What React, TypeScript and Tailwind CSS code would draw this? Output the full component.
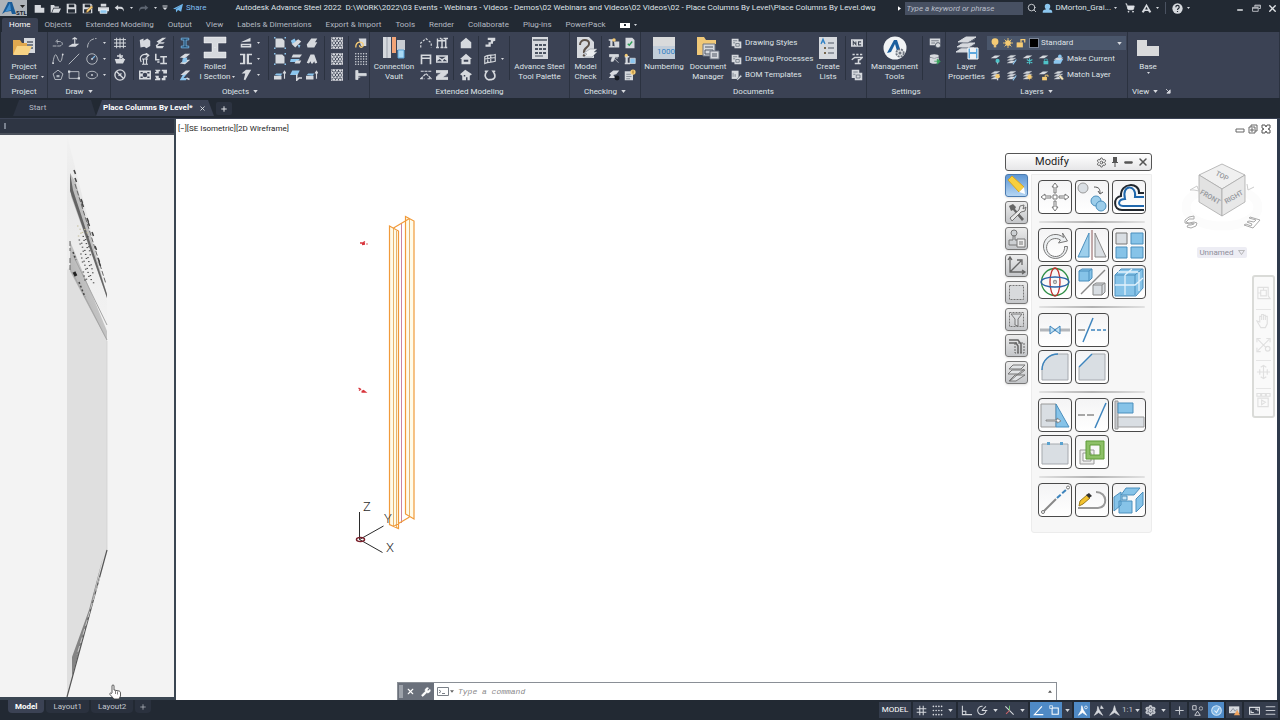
import type { ReactNode } from 'react';
import clsx from 'clsx';
import { Search, ShoppingCart, Settings, Menu, Plus, X, Minus, Wrench } from 'lucide-react';

// Ribbon + status bar glyphs, all on a 16x16 grid
const L = '#d6d9de';
const B = '#8cc6ee';
const Y = '#f5cb74';
const G = '#4fc3c9';

const sheet = <path d="M2 5l5-3h7l-5 3zM2 9l5-3h7l-5 3zM2 13l5-3h7l-5 3z" fill={L} stroke={L} strokeWidth=".6" />;
const checker = (
  <g fill={L}>
    {[0, 1, 2, 3, 4].map((r) =>
      [0, 1, 2, 3].map((c) => <circle key={`${r}-${c}`} cx={2 + c * 4 - (r % 2 ? 0 : -2)} cy={2 + r * 3} r="1.500" />),
    )}
    <path d="M.5.5h15v15H.5zM0 4l4-4M0 10L10 0M0 16L16 0M6 16L16 6M12 16l4-4" fill="none" stroke={L} strokeWidth=".8" />
  </g>
);

const ICONS: Record<string, ReactNode> = {
  newFile: <path d="M1 3h9l5 4v7H1zM10 3v4h5" fill={L} />,
  open: <path d="M1 3h5l1 2h6v2H5l-3 7H1zM5.500 8H16l-3 6H3z" fill={L} />,
  save: <path d="M1 1h12l2 2v12H1zM4 2v4h8V2zM3 9v5h10V9z" fill={L} fillRule="evenodd" />,
  saveAs: <><path d="M1 1h12l2 2v12H1zM4 2v4h8V2zM3 9v5h10V9z" fill={L} fillRule="evenodd" /><path d="M6 14l1-4 7-6 2 2-7 7z" fill={Y} stroke="#6b4a26" strokeWidth=".7" /></>,
  print: <><path d="M4 1h8v4H4zM0 6h16v6H0z" fill={L} /><path d="M3 10h10v5H3z" fill={B} stroke="#fff" /></>,
  undo: <path d="M6 3L1 7l5 4V8.500h3c3 0 4 1 5 4 1-4-1-7-5-7H6z" fill={L} />,
  redo: <path d="M10 3l5 4-5 4V8.500H7c-3 0-4 1-5 4C1 8.500 3 5.500 7 5.500h3z" fill="#5d6571" />,
  down: <path d="M3 3h10v2H3zM3 7h10l-5 5z" fill={L} />,
  plane: <path d="M0 9L16 1l-3 13-5-3-3 4-.5-5L13 4 3.500 10z" fill="#6fb6ec" />,
  user: <path d="M8 1a4 4 0 014 4c0 2-1 3.500-2 4 4 .5 5 2 5 5H1c0-3 1-4.500 5-5C5 8.500 4 7 4 5a4 4 0 014-4z" fill={B} />,
  adsk: <path d="M8 1l7 12-3 1-1.500-2.500h-5L4 14l-3-1zM8 5.500l-2 4h4z" fill={L} fillRule="evenodd" />,
  help: <><circle cx="8" cy="8" r="7.500" fill={L} /><path d="M5.500 6c0-3.500 5-3.500 5 0 0 2-2.500 2-2.500 4M8 11.500v1.500" stroke="#222933" strokeWidth="1.700" fill="none" /></>,
  restore: <path d="M5 5V2h10v6h-3M1 6h10v7H1zM1 7.500h10M5 3.500h10" stroke={L} strokeWidth="1.400" fill="none" />,
  pline: <path d="M1 12h9c5 0 5-6 0-6H6M8 3.500L5 6l3 2.500" stroke={L} fill="none" strokeDasharray="5 1" />,
  colTool: <><path d="M9 1v10M6 3l3-2 3 2" stroke={L} strokeWidth="1.500" fill="none" /><path d="M1 12l5-3h9l-5 4H1z" fill={L} /></>,
  arc: <path d="M2 14C2 7 7 2 14 2" stroke={L} fill="none" strokeDasharray="7 1.500" />,
  spline: <><path d="M1 14C4-4 6 3 8 8s5 6 6-6" stroke={L} fill="none" /><circle cx="1.500" cy="13.500" r="1.200" fill={L} /><circle cx="14.300" cy="2" r="1.200" fill={L} /></>,
  line: <path d="M1 15L15 1" stroke={L} fill="none" />,
  circle: <><circle cx="8" cy="8" r="7" stroke={L} fill="none" /><path d="M8 8l4-4" stroke="#7bb8e6" strokeWidth="1.500" /><circle cx="8" cy="8" r="1.200" fill={L} /></>,
  polygon: <><path d="M8 1.500l6.500 5L12 14H4L1.500 6.500z" stroke={L} fill="none" /><path d="M6 8h4v3H6z" fill="#a9b0ba" /></>,
  rect: <><path d="M1.500 3.500h13v9h-13z" stroke={L} fill="none" /><path d="M0 2h3v3H0zM13 11h3v3h-3z" fill={L} /></>,
  ellipse: <><ellipse cx="8" cy="8" rx="7.300" ry="5" stroke={L} fill="none" /><circle cx="8" cy="8" r="1.200" fill={L} /></>,
  gridLines: <path d="M3.500 1v14M8 1v14M12.500 1v14M0 3.500h16M0 8h16M0 12.500h16" stroke={L} strokeWidth="1.300" />,
  levelTool: <><path d="M8 1v12M4 4h8M8 5l5 3" stroke={L} strokeWidth="1.700" fill="none" /><path d="M1 8h14l-3 6H3z" fill={L} /></>,
  noSign: <><circle cx="8" cy="8" r="6.800" stroke={L} strokeWidth="1.800" fill="none" /><path d="M3 3l10 10M6 9l4-3" stroke={L} strokeWidth="1.800" /></>,
  block3d: <path d="M1 4l5-2v3l5-3 4 3v7l-5 3-3-2-5 1z" fill={L} />,
  plates: <path d="M2 6l8-5h5L7 7h6l-2 2H6l-3 3h9l-2 3H2l-1-4 4-3z" fill={L} />,
  hook: <path d="M3 12C-1 4 6 0 12 3M9 0l4 3-4 4M6 8v7M10 8v7M4 8h8M4 15h8" stroke={L} strokeWidth="1.600" fill="none" />,
  lBeam: <path d="M1 1v8h5M7 5h9M7 14h9M11.500 5v9M3 12h3" stroke={L} strokeWidth="2.200" fill="none" />,
  box4: <path d="M0 2h16v12H0zM2 4v2h3V4zM11 4v2h3V4zM5 8a3 3 0 006 0 3 3 0 00-6 0zM2 10v2h3v-2zM11 10v2h3v-2z" fill={L} fillRule="evenodd" />,
  box4b: <path d="M0 1h7v2H5v3H0V4h2zM9 1h7v5h-5V3H9zM0 9h5v3h2v3H0v-2h2zM11 9h5v2h-2v4H9v-3h2z" fill={L} />,
  iBlue: <path d="M3 1.500h10v2.500H9.500v8H13v2.500H3V12h3.500V4H3z" fill="#264e6f" stroke="#79bdf0" />,
  beam: <><path d="M1 6l7-5h7L8 7zM1 14l7-5h7l-7 6z" fill={L} /><path d="M5 7l6-1-1 6-6 1z" fill={B} /></>,
  beamB: <><path d="M2 8l7-6h6L9 8z" fill={L} /><path d="M5 8l5-1-4 5h5l-2 3H1z" fill={B} /><path d="M10 12l4 2" stroke={L} strokeWidth="2" /></>,
  taper: <path d="M1 7L14 1v5zM1 9h14v5H1zM3 11v1h10v-1z" fill={L} fillRule="evenodd" />,
  channels: <path d="M0 1h7v14H0v-2h4V3H0zM16 1H9v14h7v-2h-4V3h4z" fill={L} />,
  bent: <path d="M2 6l6-5h7l-3 5-5 9-2-1 2-8z" fill={L} />,
  plate: <><path d="M2 2h9l3 3v9H2z" fill={L} /><path d="M0 0h2v2H0zM14 0h2v2h-2zM0 14h2v2H0zM14 14h2v2h-2z" fill={B} /></>,
  boltUp: <><path d="M2 9l9-6 4 3-8 8z" fill={L} /><path d="M1 5l5-3 2 4-5 3z" fill={B} /><path d="M10 10l4 1-2 4z" fill={B} /></>,
  folded: <path d="M1 10l6-8h8l-3 5h3l-4 7H2z" fill={L} />,
  splitPl: <><path d="M4 2h12l-3 4H2z" fill={L} /><path d="M1 8h12l-3 4H0z" fill={B} /><path d="M8 10h7l-2 4H6z" fill={L} /></>,
  cone: <path d="M1 13L6 2h5l4 11-3 1-1-3-2 3H7l-1-3-2 3z" fill={L} />,
  slabUp: <><path d="M0 9h10v5H0z" fill={L} /><path d="M1 8l2-2h8L9 9z" fill={B} /><path d="M14 13V4M12 6l2-3 2 3" stroke={L} strokeWidth="1.500" fill="none" /></>,
  slabDn: <><path d="M3 2h10l-3 6H0z" fill={B} /><path d="M9 7v8l3-3h4" stroke={L} strokeWidth="2" fill="none" /></>,
  checker,
  dots: <g fill={L}>{[1, 4.5, 8, 11.5, 15].map((y) => [1, 4.5, 8, 11.5, 15].map((x) => <circle key={`${x}-${y}`} cx={x} cy={y} r="1" />))}</g>,
  shearStud: <path d="M1 2h3v12H1zM4 6h11v3H4zM4 11h3" stroke={L} fill={L} />,
  cloud: <><path d="M5 2h10v10H8z" fill={L} /><path d="M1 14c0-9 10-9 10-3 0 3-5 4-5 0" stroke={Y} strokeWidth="1.800" fill="none" /></>,
  roofDash: <path d="M1 14V8l7-6 7 6v6" stroke={L} strokeWidth="1.600" fill="none" strokeDasharray="3 2" />,
  frames: <path d="M2 2v12M8 2v12M13 2v12M0 14h4M6 14h4M11 14h4M2 5h11M5 2h2M10 2h6" stroke={L} strokeWidth="1.900" fill="none" />,
  portal: <path d="M2 15V3h12v12M2 7h12" stroke={L} strokeWidth="2.200" fill="none" />,
  truss: <path d="M0 3h16v10H0zM3 5h10l-5 3zM1 11l4-3 3 3zM15 11l-4-3-2 3z" fill={L} fillRule="evenodd" />,
  trussD: <path d="M1 3h14M1 13l7-7 7 7M0 13h6M10 13h6" stroke={L} strokeWidth="1.600" fill="none" strokeDasharray="4 1" />,
  trussZ: <path d="M0 2h16v3l-7 6h7v3H0v-3l7-6H0zM2 8h3M11 8h3" fill={L} stroke={L} />,
  house: <path d="M1 7l7-6 7 6v8H1z" fill={L} />,
  houseM: <path d="M0 8l8-7 8 7h-2v7H2V8zM5 9v2.500h6V9z" fill={L} fillRule="evenodd" />,
  houseS: <path d="M0 7l7-6 9 6-3 2v6H3V9zM5 8v2h2V8zM8 11v4h2v-4z" fill={L} fillRule="evenodd" />,
  stair: <path d="M5 1h10v4l-3 1v3H9v4H2v-3h4V7h3V4H5z" fill={L} />,
  railing: <path d="M1 5c5-4 9-1 14-3v9c-5 2-9 0-14 3zM5 3v10M9 3v9M1 8l14-2" stroke={L} strokeWidth="1.500" fill="none" />,
  cage: <path d="M1 3h3c-6 7 1 13 4 11 6 1 9-4 4-11h3" stroke={L} strokeWidth="2.200" fill="none" />,
  chk1: <><path d="M1 3h7v2H6v7h3v2H1v-2h2V5H1z" fill={L} /><path d="M8 6h7v8H9z" fill={L} /><circle cx="8" cy="4" r="2.300" fill={Y} /></>,
  chk2: <><path d="M2 1h9l3 3v11H2z" fill={L} /><path d="M5 9l2 2 4-5" stroke="#2f9e58" strokeWidth="1.800" fill="none" /></>,
  chk3: <path d="M2 2h12v3h-4l-3 6H4l2-6H2zM9 8l5 5M12 2v6" fill={L} stroke={L} />,
  chk4: <><path d="M1 4h6v2H5v7h3v2H1v-2h1V6H1z" fill={L} /><path d="M8 7h7v7H8z" fill={B} stroke={L} /><circle cx="3" cy="3" r="2" fill={Y} /></>,
  chk5: <><path d="M2 6l5-4h8l-4 5-4 1 3 4H1l3-4z" fill={L} /><circle cx="12" cy="12" r="3.300" fill="#15191f" /></>,
  chk6: <><path d="M1 3h11v12H1z" fill={L} /><path d="M3 7h6M3 10h7M3 13h5" stroke="#6d7581" /><circle cx="12" cy="4" r="3.500" fill={Y} /><path d="M12 2v4" stroke="#7d5a18" /></>,
  doc: <><path d="M1 1h10v4h4v10H5v-3H1z" fill={L} /><path d="M3 4h6M3 7h3M7 8h5v4H7z" stroke="#5b6472" fill="none" /></>,
  docPen: <><path d="M1 1h10v12H1z" fill={L} /><path d="M3 4v6M6 6v4" stroke="#5b6472" /><path d="M8 14l6-7 2 2-6 6z" fill={L} stroke="#3b4453" strokeWidth=".7" /></>,
  nc: <><path d="M0 3h16v10H0z" fill={L} /><path d="M3 11V6l3.500 4V6M13.500 6.500H10v4h3.500" stroke="#3f4756" strokeWidth="1.400" fill="none" /></>,
  dxf: <path d="M2 2h3M7 2h3M12 2h3M1 9l4-3h10l-3 3h-2v5h3M9 14H5" stroke={L} strokeWidth="2" fill="none" />,
  mgmtA: <><path d="M1 2h14v9H1z" fill={L} /><path d="M3 5h10M3 8h5" stroke="#59616f" /><circle cx="12" cy="11" r="3.500" fill={L} stroke="#3b4453" /></>,
  mgmtB: <><ellipse cx="7" cy="4" rx="6" ry="2.500" fill={L} /><path d="M1 5.500c3 2 9 2 12 0v7c-3 2.500-9 2.500-12 0z" fill={L} /><path d="M7 11h6M11 8l4 3-4 4z" stroke="#39a35c" fill="#39a35c" /></>,
  layOff: <><path d="M1 6l6-4h8l-6 4z" fill={L} /><circle cx="11" cy="10" r="3" fill={G} /><path d="M11 12v3" stroke={L} /></>,
  layIso: <>{sheet}<path d="M10 15l5-7" stroke={B} strokeWidth="1.600" /></>,
  layFrz: <><path d="M1 6l6-4h8l-6 4z" fill={L} /><path d="M11 6v9M7 8l8 5M15 8l-8 5" stroke={G} strokeWidth="1.600" /></>,
  layLock: <><path d="M1 6l6-4h8l-6 4z" fill={L} /><path d="M8 10h7v5H8z" fill={G} /><path d="M9.500 10V7.500h4V10" stroke={G} fill="none" /></>,
  layCur: <><path d="M1 10l5-3h9l-4 7H1z" fill={B} /><path d="M1 8l5-3h9l-5 4z" fill={L} /><circle cx="10" cy="3.500" r="2.700" fill={B} /></>,
  layOn: <>{sheet}<circle cx="11" cy="9" r="3.300" fill={Y} /><path d="M11 12v3" stroke={L} strokeWidth="2" /></>,
  layThaw: <>{sheet}<circle cx="11" cy="10" r="3" fill={Y} /><path d="M11 5v10M6 10h10M7.500 6.500l7 7M14.500 6.500l-7 7" stroke={Y} strokeWidth=".8" /></>,
  layUnlk: <><path d="M1 6l6-4h8l-6 4z" fill={L} /><path d="M6 10h7v5H6z" fill={Y} /><path d="M10.500 10V7.500h4V10" stroke={Y} strokeWidth="1.400" fill="none" /></>,
  layMatch: <>{sheet}<path d="M8 9l3-2 5 6-3 2z" fill="#f4e3b4" stroke="#3b4453" strokeWidth=".6" /></>,
  bulb: <><circle cx="8" cy="6" r="5.500" fill={Y} /><path d="M6 10h4v5H6z" fill="#e7c27a" /></>,
  sun: <><circle cx="8" cy="8" r="4.500" fill={Y} /><path d="M8 0v16M0 8h16M2.500 2.500l11 11M13.500 2.500l-11 11" stroke={Y} strokeWidth="1.400" /></>,
  lock: <><path d="M1 7h10v8H1z" fill={Y} /><path d="M8 7V2.500h6V7" stroke={Y} strokeWidth="2" fill="none" /></>,
  hash: <path d="M5.500 1v14M10.500 1v14M1 5.500h14M1 10.500h14" stroke={L} strokeWidth="1.500" />,
  dotGrid: <g fill={L}>{[2, 6, 10, 14].map((x) => [2, 8, 14].map((y) => <circle key={`${x}-${y}`} cx={x} cy={y} r="1.200" />))}</g>,
  ortho: <path d="M2 1v13h14M2 9h5v5" stroke={L} strokeWidth="1.500" fill="none" />,
  polar: <path d="M13 8a6 6 0 11-5-6M7 8h8M7 8l6-6" stroke={L} strokeWidth="1.500" fill="none" />,
  isoDraft: <><path d="M2 2l12 12" stroke={L} strokeWidth="1.500" /><path d="M8 1v7" stroke="#63b96b" strokeWidth="1.500" /><path d="M8 8l-5 5" stroke="#d3646a" strokeWidth="1.500" /></>,
  angle: <path d="M13 2L2 14h13" stroke="#fff" strokeWidth="1.600" fill="none" />,
  osnap: <><path d="M4.500 4.500h9v9h-9z" stroke="#fff" strokeWidth="1.500" fill="none" /><path d="M1 1h4v4H1z" stroke="#fff" fill="#5a93cc" /></>,
  scaleA: <><path d="M7 1l2 6 5 8-6-4-6 4 4-7z" fill="#fff" stroke="#fff" /><circle cx="13" cy="3.500" r="2" stroke="#fff" fill="none" /></>,
  scaleB: <path d="M7 2l2 5 5 8-6-4-6 4 4-7zM12 1l-1 4h4z" fill={L} stroke={L} />,
  scaleC: <path d="M8 1l2 7 5 7-7-4-7 4 5-7z" fill={L} stroke={L} />,
  shapes: <><path d="M1 1h5v6H1zM8 9l4 6H4z" stroke={L} strokeWidth="1.300" fill="none" /><circle cx="13" cy="5" r="2.500" stroke={L} fill="none" /></>,
  hwAccel: <><circle cx="8" cy="8" r="7" fill="#7fb6e6" stroke="#cfe4f6" strokeWidth="1.500" /><path d="M5 8l3 3 4-7" stroke="#e9f3fc" strokeWidth="1.500" fill="none" /></>,
  warn: <><path d="M0 2h15v10H0z" fill={L} /><path d="M2 10l4-5 3 4 3-3" stroke="#667080" fill="none" /><path d="M7 15l5-8 4 8z" fill="#f0a35e" /></>,
  clean: <path d="M.8 3.500h14.500v10H.8zM9 6h4v3M7 11H3V8" stroke={L} strokeWidth="1.600" fill="none" />,
};

function Icon({ name, className = 'size-3' }: { name: string; className?: string }) {
  return (
    <svg viewBox="0 0 16 16" className={clsx('shrink-0', className)} aria-hidden="true">
      {ICONS[name]}
    </svg>
  );
}

const Caret = ({ small }: { small?: boolean }) => (
  <svg viewBox="0 0 6 4" className={small ? 'w-[3px] h-[2px] shrink-0' : 'w-[5px] h-[3px] shrink-0'} aria-hidden="true">
    <path d="M0 0h6L3 4z" fill={L} />
  </svg>
);

const Divider = () => <div className="w-px shrink-0 my-1 bg-[#2b3240]" />;

// Small tool buttons, filled column by column, three rows each
function Tools({ cols, className }: { cols: string[][]; className: string }) {
  return (
    <div className={clsx('flex shrink-0 pt-[3px]', className)}>
      {cols.map((col, i) => (
        <div key={i} className={col.includes('caret') ? 'w-2' : 'w-4'}>
          {col.map((name, j) => name ? (
            <button key={j} type="button" aria-label={name} className="flex w-full h-4 items-center justify-center">
              {name === 'caret' ? <Caret small /> : <Icon name={name} />}
            </button>
          ) : <div key={j} className="h-4" />)}
        </div>
      ))}
    </div>
  );
}

function BigTool({ icon, lines, caret, className }: { icon: ReactNode; lines: string[]; caret?: boolean; className: string }) {
  return (
    <button type="button" className={clsx('flex flex-col items-center shrink-0 pt-1 leading-[10px]', className)}>
      <svg viewBox="0 0 24 24" className="size-6 mb-[2px]" aria-hidden="true">{icon}</svg>
      {lines.map((l, i) => (
        <span key={l} className="relative whitespace-nowrap">
          {l}
          {caret && i === lines.length - 1 && lines.length > 1 && (
            <span className="absolute left-full bottom-1 ml-[2px]"><Caret small /></span>
          )}
        </span>
      ))}
      {caret && lines.length === 1 && <span><Caret small /></span>}
    </button>
  );
}

function Group({ title, arrow, left, className, children }: { title: string; arrow?: boolean; left?: boolean; className: string; children: ReactNode }) {
  return (
    <section className={clsx('flex flex-col bg-[#3b4254] border-r border-[#2b3240]', className)}>
      <div className="flex h-[52px]">{children}</div>
      <div className={clsx('flex h-[14px] items-center gap-1 pt-px', left ? 'pl-1' : 'justify-center')}>
        {title}
        {arrow && <Caret />}
        {left && <svg viewBox="0 0 6 6" className="ml-1 size-[5px]" aria-hidden="true"><path d="M0 0l4 4M5 1v4H1z" stroke={L} fill={L} /></svg>}
      </div>
    </section>
  );
}

const BIG: Record<string, ReactNode> = {
  project: <><path d="M12 2h11v15H12z" fill="#d6d9de" /><path d="M15 6h6M15 9h6M15 12h6" stroke="#555d6b" strokeWidth="1.300" /><path d="M1 4h7l2 3h5v11H1z" fill="#e0a84f" /><path d="M5 10h15l-4 9H1z" fill="#f8d384" /></>,
  rolled: <path d="M1 1h22v6h-8v9h8v6H1v-6h8V7H1zM12 11v1" fill={L} stroke="#fff" strokeWidth=".5" />,
  vault: <><path d="M1 1h8v21H1z" fill={L} /><path d="M5 1v21" stroke="#9ba1ab" /><path d="M10 1h4v16h-4z" fill="#f2a477" /><path d="M15 4h8v10h-8z" fill="#c9cdd3" /><path d="M16 14h6v8h-6z" fill="#a9d9f4" stroke="#5aa3d8" /></>,
  palette: <><path d="M4 1h16v22H4z" fill={L} /><path d="M5 4h14" stroke="#4b5361" strokeWidth="1.500" />{[8, 12, 16].map((y) => <path key={y} d={`M7 ${y}h3v2H7zM11 ${y}h3v2h-3zM15 ${y}h3v2h-3z`} fill="#4b5361" />)}<path d="M7 20h8" stroke="#4b5361" /></>,
  check: <><path d="M3 1h12l5 5v16H3z" fill={L} /><path d="M6 9c0-7 10-6 9-1 0 4-6 3-5 9M9 19l2 1" stroke="#5c5149" strokeWidth="2" fill="none" /><path d="M10 17l6-4h7l-3 3h3l-5 5h-8l3-3z" fill="#eceef0" stroke="#8b919b" strokeWidth=".6" /></>,
  numbering: <><path d="M1 1h22v22H1z" fill="#d9dadb" /><path d="M1 10h22v13H1z" fill="#c2cdd9" /><text x="14" y="18" textAnchor="middle" fontSize="8" fill="#2e7fc4">1000</text></>,
  docman: <><path d="M1 1h7l2 3h10v4h-8v11H1z" fill="#f0c878" /><path d="M7 8h12v12H7z" fill={L} stroke="#6c7482" /><path d="M9 11h8M9 14h8v4H9z" stroke="#4f5765" fill="none" /><path d="M14 15h9v8h-9z" fill={L} stroke="#6c7482" /><path d="M16 18h5M16 20h5" stroke="#4f5765" /></>,
  lists: <><path d="M3 1h18v22H3z" fill={L} /><path d="M5 8l2-5 2 5M6 6h2" stroke="#2e7fc4" strokeWidth="1.200" fill="none" /><path d="M12 7h6M12 12h6M12 17h6" stroke="#4f5765" /><path d="M8 11h2v2H8zM8 16h2v2H8z" fill="#77674e" /></>,
  mgmt: <><circle cx="12" cy="12" r="11.500" fill="#f1f3f5" /><path d="M4 17l7-13h3l4 12-4-1-2-7-4 8z" fill="#1b5f9e" /><circle cx="17" cy="17" r="3.700" fill="#e2e4e7" stroke="#6f7681" strokeWidth="1.800" strokeDasharray="2 1" /><circle cx="17" cy="17" r="1.500" fill="#6f7681" /></>,
  layers: <><path d="M3 6l8-5h10l-8 5zM2 11l6-4h12l-6 4zM1 16l6-4h12l-6 4z" fill={L} stroke={L} /><path d="M3 7h10l7-4M2 12h12l6-4" stroke="#6c7482" strokeWidth=".7" fill="none" /><path d="M13 12h10v11H13z" fill="#5da8de" stroke="#fff" /><path d="M15 12h6v4h-6zM15 18h6v5h-6z" fill="#eef1f4" /></>,
  base: <path d="M1 4h10v6h12v10H1z" fill="#d9dadb" />,
};

const RIBBON_TABS = ['Home', 'Objects', 'Extended Modeling', 'Output', 'View', 'Labels & Dimensions', 'Export & Import', 'Tools', 'Render', 'Collaborate', 'Plug-ins', 'PowerPack'];

function TitleBar() {
  const btn = 'flex w-4 shrink-0 h-4 items-center justify-center';
  return (
    <header className="flex h-4 shrink-0 items-center">
      <button type="button" aria-label="Application menu" className="w-[27px] h-4 shrink-0">
        <svg viewBox="0 0 27 16" className="w-[27px] h-4">
          <path d="M0 0h27v16H0z" fill="#aeb3b9" />
          <path d="M2 14L8 2h4l4 12h-4l-1-3-6 1z" fill="#1a5b97" />
          <path d="M5 12l5-9 1 7z" fill="#3f8fd0" />
          <path d="M20 5h5l-2.500 3z" fill="#222" />
          <text x="16" y="14.500" fontSize="6" fontWeight="700" fill="#16202c">STL</text>
        </svg>
      </button>
      <nav aria-label="Quick access" className="flex items-center pl-1">
        {['newFile', 'open', 'save', 'saveAs', 'print', 'undo'].map((n) => (
          <button key={n} type="button" aria-label={n} className={btn}><Icon name={n} className="size-[11px]" /></button>
        ))}
        <span className="w-2 flex justify-center"><Caret small /></span>
        <button type="button" aria-label="redo" className={btn}><Icon name="redo" className="size-[11px]" /></button>
        <span className="w-2 flex justify-center"><Caret small /></span>
        <button type="button" aria-label="customize" className="w-3 flex justify-center"><Icon name="down" className="size-2" /></button>
        <button type="button" className="flex items-center gap-[3px] pl-[2px] text-[#7fbdf0]">
          <Icon name="plane" className="size-[10px]" />Share
        </button>
      </nav>
      <h1 className="flex gap-1 pl-[29px] whitespace-nowrap">
        <span>Autodesk Advance Steel 2022</span>
        <span>D:\WORK\2022\03 Events - Webinars - Videos - Demos\02 Webinars and Videos\02 Videos\02 - Place Columns By Level\Place Columns By Level.dwg</span>
      </h1>
      <div className="ml-auto flex items-center shrink-0">
        <svg viewBox="0 0 4 6" className="w-[3px] h-[5px] mr-1" aria-hidden="true"><path d="M0 0l4 3-4 3z" fill="#fff" /></svg>
        <input aria-label="Search" placeholder="Type a keyword or phrase" className="w-[118px] h-[13px] px-[2px] bg-[#475062] italic placeholder:text-[#b9bec8] outline-none" />
        <button type="button" aria-label="Find" className="flex w-[18px] justify-center"><Search size={10} /></button>
        <button type="button" className="flex items-center gap-[3px] pl-px"><Icon name="user" className="size-[11px]" />DMorton_Grai...<Caret small /></button>
        <button type="button" aria-label="Store" className="pl-2"><ShoppingCart size={10} fill="currentColor" /></button>
        <button type="button" aria-label="Autodesk App Store" className="flex items-center gap-1 pl-[6px]"><Icon name="adsk" className="size-[11px]" /><Caret small /></button>
        <span className="w-px h-3 mx-[6px] bg-[#4a5261]" />
        <button type="button" aria-label="Help" className="flex items-center gap-1"><Icon name="help" className="size-[11px]" /><Caret small /></button>
        <div className="flex pl-[42px]">
          <button type="button" aria-label="Minimize" className="flex w-4 h-4 items-center justify-center pt-1"><Minus size={8} strokeWidth={4} /></button>
          <button type="button" aria-label="Restore" className={btn}><Icon name="restore" className="size-[9px]" /></button>
          <button type="button" aria-label="Close" className={btn}><X size={11} strokeWidth={3} /></button>
        </div>
      </div>
    </header>
  );
}

function Ribbon() {
  return (
    <>
      <nav aria-label="Ribbon tabs" className="flex h-4 shrink-0 items-end pl-[2px] text-[#b4b9c2]">
        {RIBBON_TABS.map((t, i) => (
          <button key={t} type="button" className={clsx('h-[14px] px-[7px] leading-[14px] whitespace-nowrap', i === 0 && 'bg-[#3b4254] text-white rounded-t-[2px]')}>{t}</button>
        ))}
        <button type="button" aria-label="Ribbon display" className="flex h-[14px] items-center gap-1 pl-[7px]">
          <span className="flex w-[10px] h-[5px] bg-white items-center justify-center"><span className="size-[2px] bg-[#222933]" /></span>
          <Caret small />
        </button>
      </nav>
      <div className="flex h-[66px] shrink-0 pl-px whitespace-nowrap">
        <Group title="Project" className="w-[47px]">
          <BigTool icon={BIG.project} lines={['Project', 'Explorer']} caret className="w-[46px]" />
        </Group>
        <Group title="Draw" arrow className="w-[63px]">
          <Tools className="pl-[2px]" cols={[['pline', 'spline', 'polygon'], ['colTool', 'line', 'rect']]} />
          <Tools className="pl-[2px]" cols={[['arc', 'circle', 'ellipse'], ['caret', 'caret', 'caret']]} />
        </Group>
        <Group title="Objects" arrow className="w-[259px]">
          <Tools className="w-[22px] pl-px" cols={[['gridLines', 'levelTool', 'noSign']]} />
          <Divider />
          <Tools className="w-[39px] pl-[3px]" cols={[['block3d', 'hook', 'box4'], ['plates', 'lBeam', 'box4b']]} />
          <Divider />
          <Tools className="w-6 pl-[3px]" cols={[['iBlue', 'beam', 'beamB']]} />
          <BigTool icon={BIG.rolled} lines={['Rolled', 'I Section']} caret className="w-[34px]" />
          <Tools className="w-[36px] pl-[6px]" cols={[['taper', 'channels', 'bent'], ['caret', 'caret', 'caret']]} />
          <Divider />
          <Tools className="w-[55px] pl-[3px]" cols={[['plate', 'plate', 'slabUp'], ['boltUp', 'splitPl', 'slabDn'], ['folded', 'cone', 'slabUp']]} />
          <Divider />
          <Tools className="w-[23px] pl-1" cols={[['checker', 'checker', 'checker']]} />
          <Divider />
          <Tools className="w-5 pl-1" cols={[['cloud', 'dots', 'shearStud']]} />
        </Group>
        <Group title="Extended Modeling" className="w-[200px]">
          <BigTool icon={BIG.vault} lines={['Connection', 'Vault']} className="w-[48px]" />
          <Tools className="w-[35px]" cols={[['roofDash', 'portal', 'trussD'], ['frames', 'truss', 'trussZ']]} />
          <Divider />
          <Tools className="w-6 pl-1" cols={[['house', 'houseM', 'houseS']]} />
          <Divider />
          <Tools className="w-[30px] pl-[3px]" cols={[['stair', 'railing', 'cage'], ['', 'caret', '']]} />
          <Divider />
          <BigTool icon={BIG.palette} lines={['Advance Steel', 'Tool Palette']} className="w-[59px]" />
        </Group>
        <Group title="Checking" arrow className="w-[71px]">
          <BigTool icon={BIG.check} lines={['Model', 'Check']} className="w-[31px]" />
          <Divider />
          <Tools className="pl-1" cols={[['chk1', 'chk3', 'chk5'], ['chk2', 'chk4', 'chk6']]} />
        </Group>
        <Group title="Documents" className="w-[226px]">
          <BigTool icon={BIG.numbering} lines={['Numbering']} className="w-[46px]" />
          <BigTool icon={BIG.docman} lines={['Document', 'Manager']} className="w-[42px]" />
          <div className="w-[82px] pt-[3px]">
            {[['doc', 'Drawing Styles'], ['doc', 'Drawing Processes'], ['docPen', 'BOM Templates']].map(([icon, label]) => (
              <button key={label} type="button" className="flex h-4 items-center gap-[3px] pl-[2px]"><Icon name={icon} className="size-[11px]" />{label}</button>
            ))}
          </div>
          <BigTool icon={BIG.lists} lines={['Create', 'Lists']} className="w-[34px]" />
          <Divider />
          <Tools className="pl-[3px]" cols={[['nc', 'dxf', 'doc']]} />
        </Group>
        <Group title="Settings" className="w-[79px]">
          <BigTool icon={BIG.mgmt} lines={['Management', 'Tools']} className="w-[55px]" />
          <Divider />
          <Tools className="pl-1" cols={[['mgmtA', 'mgmtB']]} />
        </Group>
        <Group title="Layers" arrow className="w-[182px]">
          <BigTool icon={BIG.layers} lines={['Layer', 'Properties']} className="w-[41px]" />
          <div className="flex-1 pt-[3px] pr-px">
            <div className="relative flex h-4 items-center">
              <select aria-label="Layer" className="w-full h-[14px] pl-[54px] appearance-none bg-[#4a566b] outline-none">
                <option>Standard</option>
              </select>
              <span className="absolute left-[3px] flex items-center gap-[3px] pointer-events-none">
                <Icon name="bulb" className="size-[10px]" />
                <Icon name="sun" className="size-[10px]" />
                <Icon name="lock" className="size-[10px]" />
                <span className="size-[10px] bg-black border border-[#7b8597]" />
              </span>
              <span className="absolute right-1 pointer-events-none"><Caret /></span>
            </div>
            {[['layOff', 'layIso', 'layFrz', 'layLock', 'layCur', 'Make Current'], ['layOn', 'layIso', 'layThaw', 'layUnlk', 'layMatch', 'Match Layer']].map((row) => (
              <div key={row[5]} className="flex h-4 items-center">
                {row.slice(0, 4).map((n) => (
                  <button key={n} type="button" aria-label={n} className="flex w-4 justify-center"><Icon name={n} className="size-[11px]" /></button>
                ))}
                <button type="button" className="flex items-center gap-[3px] pl-[2px]"><Icon name={row[4]} className="size-[11px]" />{row[5]}</button>
              </div>
            ))}
          </div>
        </Group>
        <Group title="View" arrow left className="flex-1">
          <BigTool icon={BIG.base} lines={['Base']} caret className="w-10" />
        </Group>
      </div>
    </>
  );
}

function DocTabs() {
  return (
    <nav aria-label="Drawings" className="flex h-[21px] shrink-0 items-end pl-[13px] pb-[2px] border-b border-[#3b4254]">
      <button type="button" className="h-4 w-[83px] pl-4 text-left text-[#b4b9c2] bg-[#2c3341] [clip-path:polygon(6px_0,78px_0,100%_100%,0_100%)]">Start</button>
      <div className="flex h-4 w-[118px] items-center gap-[6px] pl-[7px] bg-[#3b4254] [clip-path:polygon(6px_0,112px_0,100%_100%,0_100%)]">
        <button type="button" className="font-bold text-white whitespace-nowrap">Place Columns By Level*</button>
        <button type="button" aria-label="Close tab"><X size={7} strokeWidth={3} /></button>
      </div>
      <button type="button" aria-label="New tab" className="flex h-[13px] w-4 ml-[2px] mb-px items-center justify-center rounded-[2px] bg-[#2c3341]"><Plus size={8} strokeWidth={3} /></button>
    </nav>
  );
}

const SPECKS = [[74, 170], [75, 178], [81, 199], [82, 203], [87, 218], [88, 222], [92, 232], [95, 246], [98, 258], [99, 262]];
const DOTS = Array.from({ length: 46 }, (_, i) => [77 + (i % 5) * 2.2 + i * 0.16, 226 + i * 1.2 + (i % 3) * 2]);

// Printed sheet seen almost edge-on in the left hand view
function SheetPreview() {
  return (
    <svg viewBox="0 135 174 562" className="w-[174px] h-[562px] block" aria-hidden="true">
      <defs>
        <linearGradient id="fade" x1="0" y1="0" x2="0" y2="1">
          <stop offset="0" stopColor="#f2f2f2" />
          <stop offset=".3" stopColor="#e8e8e8" />
          <stop offset="1" stopColor="#f4f4f4" />
        </linearGradient>
        <linearGradient id="band" x1="0" y1="1" x2="1" y2="0">
          <stop offset="0" stopColor="#6f6f6f" />
          <stop offset="1" stopColor="#d5d5d5" />
        </linearGradient>
      </defs>
      <path d="M67 135l40 160v50L67 275z" fill="url(#fade)" />
      <path d="M67 270l3-3 37 74v210L67 697z" fill="#dfdfdf" />
      <path d="M70 173l6 10 31 112v3L71 196z" fill="url(#band)" opacity=".6" />
      <path d="M70 173v18l37 107v-4L73 190z" fill="#555" opacity=".85" />
      <path d="M70 241l37 90v10L70 271z" fill="url(#band)" opacity=".6" />
      <path d="M70 241v10M70 258v14M75 184l31 100" stroke="#666" strokeDasharray="5 2" />
      <path d="M72 272l35 68M73 255l34 70" stroke="#a5a5a5" />
      <path d="M74 272l2 4" stroke="#222" strokeWidth="3" />
      <path d="M79 282l6 15M73 252l3 8" stroke="#444" strokeWidth="1.500" strokeDasharray="2 2" />
      {SPECKS.map(([x, y]) => <path key={y} d={`M${x} ${y}l1.500 4`} stroke="#444" strokeWidth="1.500" />)}
      {DOTS.map(([x, y], i) => <path key={i} d={`M${x} ${y}h1.500`} stroke={i < 7 ? '#c4bd9a' : '#444'} />)}
      <path d="M107 341v210" stroke="#cfcfcf" strokeWidth=".7" />
      <path d="M107 550L67 697" stroke="#555" strokeWidth="1.200" />
      <path d="M103 557L89 610 72 657v20l16-58z" fill="#666" opacity=".75" />
      <path d="M100 577L77 655" stroke="#ddd" strokeWidth=".8" strokeDasharray="6 3" />
    </svg>
  );
}

function ModelDrawing() {
  return (
    <svg viewBox="176 119 260 460" className="absolute left-0 top-0 w-[260px] h-[460px]" aria-hidden="true">
      <path d="M389 226l9 5v298l-9-5zM405 216l9 5v298l-9-5z" fill="#fffbe9" />
      <path d="M401.500 223v300" stroke="#c983a3" strokeWidth="1" />
      <path d="M393.500 228v298M409.500 219v298M396.500 231v296" stroke="#e6b46c" />
      <g stroke="#f19a3a" fill="none" strokeWidth="1.200">
        <path d="M389.500 226v298.500l9 4V231zM405.500 216.500V514l8.500 5V221zM393.500 228l16-9.500M393.500 526.500l16-9.500" />
      </g>
      <g stroke="#2b2b2b" fill="none">
        <path d="M359.500 512v27.500l23 13M359.500 539.500l24-13.500" />
      </g>
      <ellipse cx="360.500" cy="539.500" rx="4" ry="2" fill="none" stroke="#7a1f2a" strokeWidth="1.500" />
      <g fill="#2b2b2b" fontSize="13" fontWeight="300" textAnchor="middle">
        <text x="367" y="511">Z</text>
        <text x="388" y="523">Y</text>
        <text x="390" y="552">X</text>
      </g>
      <g stroke="#d8353c" strokeWidth="1.300" fill="none">
        <path d="M360 243h3l2-1.500M362 244.500l3-.5M364 241.500v3M366.500 244h1" />
        <path d="M358.500 388l2.500 1.500M359 390.500l2-1.500M361.500 391.500l2-1 2 1.500h-4" />
      </g>
    </svg>
  );
}

const grad = '#d9dee3';
const MOD: Record<string, ReactNode> = {
  move: <g fill="#fff" stroke="#777"><path d="M14 14h4v4h-4zM15 12V6h-2l3-4 3 4h-2v6zM15 20v6h-2l3 4 3-4h-2v-6zM12 15H6v-2l-4 3 4 3v-2h6zM20 15h6v-2l4 3-4 3v-2h-6z" /></g>,
  copy: <><circle cx="7" cy="7" r="5" fill={grad} stroke="#999" /><circle cx="20" cy="20" r="5" fill="#9ccdea" stroke="#4b8fbd" /><circle cx="25" cy="25" r="5" fill="#9ccdea" stroke="#4b8fbd" /><path d="M18 6c5 0 6 2 6 6M22 10l2 3 3-2" stroke="#555" fill="none" /></>,
  offset: <><path d="M31 29H9C0 29 0 16 8 15 7 1 27 1 26 12h5" fill="none" stroke="#20262e" strokeWidth="2" /><path d="M31 25H10c-6 0-5-7 2-7C8 3 24 3 22 16h9" fill="none" stroke="#2068ad" strokeWidth="2" /></>,
  rotate: <path d="M24.500 8.500a12 12 0 104 9h-3a9 9 0 11-4-6.500l-2 3 9-2-5-8z" fill="#eceff1" stroke="#777" />,
  mirror: <><path d="M13 4v24H2z" fill="#9dcfec" stroke="#4b8fbd" /><path d="M19 4v24h11z" fill={grad} stroke="#888" /><path d="M16 1v30" stroke="#8a5b5b" /></>,
  array: <><path d="M3 4h11v11H3z" fill={grad} stroke="#777" /><path d="M18 4h12v11H18zM3 18h11v11H3zM18 18h12v11H18z" fill="#86c3e8" stroke="#4b8fbd" /></>,
  rotate3d: <g fill="none" strokeWidth="1.300"><circle cx="16" cy="16" r="13.500" stroke="#2f8f46" /><ellipse cx="16" cy="16" rx="5" ry="14" stroke="#c0302e" /><ellipse cx="16" cy="16" rx="14" ry="5" stroke="#2b62a8" /><circle cx="16" cy="16" r="1.500" stroke="#999" /></g>,
  mirror3d: <><path d="M3 5l3-2h10v9l-3 3H3zM3 5h10v10M13 5l3-2" fill="#86c3e8" stroke="#4b8fbd" /><path d="M17 19l3-2h9v9l-3 3h-9zM17 19h9v10M26 19l3-2" fill={grad} stroke="#888" /><path d="M5 28L29 4" stroke="#888" strokeWidth="1.500" /></>,
  array3d: <><path d="M2 9l6-6h22v19l-7 8H2z" fill="#86c3e8" stroke="#4b8fbd" /><path d="M2 9h20l7-6M22 9v20" fill="none" stroke="#4b8fbd" /><path d="M12 9v20M2 19h20l8-7M12 9l7-6M26 6v19M5 6h20" fill="none" stroke="#e3f2fb" strokeWidth="1.300" /></>,
  join: <><path d="M1 16h30" stroke="#b2b6bb" strokeWidth="3" /><path d="M11 12l5 4-5 4zM21 12l-5 4 5 4z" fill="#bfe0f3" stroke="#3d84bd" /></>,
  trim: <><path d="M2 16h7" stroke="#555" /><path d="M15 16h15" stroke="#3d84bd" strokeDasharray="4 2" strokeWidth="1.500" /><path d="M7 28L17 4" stroke="#3d84bd" strokeWidth="1.500" /></>,
  fillet: <><path d="M3 29V19C3 9 11 3 19 3h10v26z" fill={grad} stroke="#a5a9ae" /><path d="M3 19C3 9 11 3 19 3" fill="none" stroke="#3d84bd" strokeWidth="1.500" /></>,
  chamfer: <><path d="M3 29V16L16 3h13v26z" fill={grad} stroke="#a5a9ae" /><path d="M3 16L16 3" stroke="#3d84bd" strokeWidth="1.500" /></>,
  stretch: <><path d="M2 5h15v23H2z" fill={grad} stroke="#999" /><path d="M17 5l13 23H17z" fill="#86c3e8" stroke="#4b8fbd" /><path d="M7 21h11v-2l4 3-4 2v-2H7z" fill="#fff" stroke="#777" strokeWidth=".8" /></>,
  extend: <><path d="M2 16h16" stroke="#555" strokeDasharray="7 2" strokeWidth="1.200" /><path d="M19 29L30 4" stroke="#3d84bd" strokeWidth="1.500" /></>,
  align: <><path d="M2 2h3v28H2z" fill="#c6c9cd" stroke="#999" /><path d="M5 4h15v10H5z" fill="#86c3e8" stroke="#4b8fbd" /><path d="M5 18h26v10H5z" fill={grad} stroke="#999" /></>,
  brk: <><path d="M3 8h26v20H3z" fill={grad} stroke="#a5a9ae" /><path d="M8 6h3v3H8zM21 6h3v3h-3z" fill="#5ba2cf" /></>,
  overkill: <><path d="M4 14h14v14H4zM7 17h8v8H7z" fill="#eee" stroke="#999" fillRule="evenodd" /><path d="M10 5h18v18H10zM14 9v10h10V9z" fill="#8dc067" stroke="#5d9a37" fillRule="evenodd" /></>,
  lengthen: <><path d="M4 28L17 15" stroke="#888" strokeWidth="2" /><path d="M18 14L29 4" stroke="#3d84bd" strokeWidth="2" strokeDasharray="5 2" /><circle cx="4" cy="28" r="1.500" fill="#fff" stroke="#777" /><circle cx="29" cy="3.500" r="1.500" fill="#fff" stroke="#777" /></>,
  pedit: <><path d="M20 8c12 0 12 16 2 16H2" fill="none" stroke="#999" strokeWidth="2" /><path d="M3 22l1-5 7-6 3 3-7 6z" fill="#f3c22e" stroke="#9a7a1b" /><path d="M10 11l3-2 3 3-3 2z" fill="#333" /></>,
  explode: <g fill="#86c3e8" stroke="#4b8fbd"><path d="M1 13l7-5v13l-7 6zM13 4h14l-6 7H8zM6 17h13v12H6zM23 15l7-7v13l-7 7z" /><path d="M9 12h5v4H9z" fill="#c6e4f5" /></g>,
};

const MOD_GROUPS = [
  ['move', 'copy', 'offset'],
  ['rotate', 'mirror', 'array', 'rotate3d', 'mirror3d', 'array3d'],
  ['join', 'trim', '', 'fillet', 'chamfer'],
  ['stretch', 'extend', 'align', 'brk', 'overkill'],
  ['lengthen', 'pedit', 'explode'],
];

const SIDE: [string, ReactNode][] = [
  ['Edit', <g key="a"><path d="M2 5l4-4 12 11-5 5z" fill="#f7cf3f" stroke="#d9a51d" /><path d="M18 12l1 7-6-2z" fill="#fff" /></g>],
  ['Tools', <g key="a"><path d="M3 4l4-2 3 3-1 2 9 10-2 2L7 8 5 9z" fill="#666" /><path d="M18 3l-4 1-1 4-9 8 2 3 9-9 4-1 1-4-3 2z" fill="#e8e8e8" stroke="#666" strokeWidth=".9" /></g>],
  ['Stamp', <g key="a" stroke="#777" fill="#cdd0d3"><circle cx="8" cy="5" r="3" /><path d="M7 8h2v4h4v5H3v-5h4z" /><path d="M11 11h8v8h-8zM13 14h4M13 16h4" fill="#eee" /></g>],
  ['UCS', <g key="a" stroke="#666" fill="none" strokeWidth="1.300"><path d="M4 3v14h14M4 17L15 6M11 5l5 0 0 5M2 5l2-3 2 3M16 15l3 2-3 2" /></g>],
  ['Select', <path key="a" d="M3.500 3.500h14v14h-14z" fill="#d8dadc" stroke="#777" strokeDasharray="2 1" />],
  ['Filter', <g key="a" stroke="#777"><path d="M3.500 3.500h14v14h-14z" fill="none" strokeDasharray="2 1" /><path d="M5 5h11l-4 5v7l-3-1v-6z" fill="#dcdee0" /></g>],
  ['Copy', <g key="a" stroke="#666" fill="none"><path d="M3 5h9l3 4v9M3 8h7l2 3v7" strokeWidth="1.500" /><path d="M9 8h9v10H9z" strokeDasharray="2 1" /></g>],
  ['Planes', <g key="a" stroke="#777" fill="#e1e3e5"><path d="M7 3h12l-4 4H3zM6 8h13l-5 4H2zM9 13h10l-9 6H3z" /><path d="M4 19L18 7" /></g>],
];

function ModifyPalette() {
  return (
    <aside className="absolute right-[125px] top-[34px] w-[147px] text-[#222]">
      <div className="flex h-[18px] items-center rounded-[3px] border border-[#555] bg-gradient-to-b from-white to-[#e6e6e8] px-[2px]">
        <h2 className="flex-1 text-center text-[11px]">Modify</h2>
        <div className="flex items-center gap-[3px] text-[#555]">
          <button type="button" aria-label="Options"><Settings size={11} /></button>
          <button type="button" aria-label="Pin"><svg viewBox="0 0 10 10" className="size-[10px]"><path d="M3 0h4v5h1v1H5.500v4h-1V6H2V5h1z" fill="#555" /></svg></button>
          <button type="button" aria-label="Collapse"><Minus size={11} strokeWidth={5} /></button>
          <button type="button" aria-label="Close palette"><X size={12} strokeWidth={3} /></button>
        </div>
      </div>
      <div className="flex items-start justify-between pt-[3px]">
        <div className="flex h-[210px] flex-col justify-between">
          {SIDE.map(([label, art], i) => (
            <button key={label} type="button" aria-label={label} className={clsx('size-[23px] rounded-[3px] border shadow-sm', i === 0 ? 'border-[#4b7bb0] bg-gradient-to-b from-[#5f97d3] to-[#b5d5f2]' : 'border-[#777] bg-gradient-to-b from-[#ececec] to-[#c4c6c9]')}>
              <svg viewBox="0 0 21 21" className="size-[21px]">{art}</svg>
            </button>
          ))}
        </div>
        <div className="rounded-b-[3px] border border-[#ececec] bg-[#f7f7f7] pl-[6px] pr-[5px] pt-[5px] pb-[15px]">
          {MOD_GROUPS.map((g, i) => (
            <div key={i}>
              {i > 0 && <div className="h-[14px] px-px pt-[7px]"><div className="h-[2px] rounded-full bg-gradient-to-r from-[#e2e2e2] via-[#b2b2b2] to-[#e2e2e2]" /></div>}
              <div className="grid grid-cols-3 gap-[3px]">
                {g.map((n, j) => n ? (
                  <button key={n} type="button" aria-label={n} className="size-[34px] rounded-[4px] border border-[#4a4a4a] bg-gradient-to-b from-[#f4f4f5] to-white">
                    <svg viewBox="0 0 32 32" className="size-8">{MOD[n]}</svg>
                  </button>
                ) : <span key={j} />)}
              </div>
            </div>
          ))}
        </div>
      </div>
    </aside>
  );
}

function ViewCube() {
  return (
    <div className="absolute right-[15px] top-[36px] flex w-[80px] flex-col items-center">
      <svg viewBox="1182 155 80 80" className="size-20" aria-label="View cube">
        <ellipse cx="1222" cy="207" rx="36" ry="19" fill="none" stroke="#fcfcfc" strokeWidth="9" />
        <path d="M1222 164l23 11-23 14-23-14z" fill="#f0f0f0" stroke="#aaa" strokeWidth=".8" />
        <path d="M1199 175l23 14v27l-23-14z" fill="#e2e2e2" stroke="#aaa" strokeWidth=".8" />
        <path d="M1245 175l-23 14v27l23-14z" fill="#e8e8e8" stroke="#aaa" strokeWidth=".8" />
        <g fill="#94979c" fontSize="7" fontWeight="500" textAnchor="middle">
          <text transform="translate(1221 178) rotate(28)">TOP</text>
          <text transform="translate(1209 199) rotate(30)">FRONT</text>
          <text transform="translate(1235 199) rotate(-30)">RIGHT</text>
        </g>
        <g fill="none" stroke="#aaa" strokeWidth="1">
          <path d="M1194 219l-5 0-3 3 3 1 5-1 3 1-1 3-5 2-4-1 1-2 3 0 3-1 0-1-4 1-5-1 0-3 4-3 5-1z" />
          <path d="M1250 217l10 3-7 8-9-3 2-1 5 2 1-2-5-2 2-1 5 1 2-2-7-2z" />
          <path d="M1190 190l7-4 2 5-5-1zM1247 184l1 6 6-3" stroke="#ccc" />
        </g>
      </svg>
      <button type="button" className="mt-3 flex h-[11px] items-center gap-1 rounded-[2px] bg-[#ededf4] px-[2px] text-[#8d8d9a]">
        Unnamed
        <svg viewBox="0 0 8 6" className="w-[7px] h-[5px]"><path d="M.5.5h7L4 5.500z" fill="none" stroke="#aaa" /></svg>
      </button>
    </div>
  );
}

const NAV: [string, string][] = [
  ['Wheel', 'M2 2h11v9l2 3H2zM5 5h6v6H5zM8 2v3M2 8h3'],
  ['Pan', 'M5 15L1 8l3 1V3h2v4-6h2v6-5h2v5-4h2v8l-2 4z'],
  ['Zoom extents', 'M2 2l9 9M2 14L14 2M1 5V1h4M15 5V1h-4M1 11v4h4M10 12a2.500 2.500 0 105 0 2.500 2.500 0 00-5 0'],
  ['Orbit', 'M8 1v14M1 8h14M5 3l3-2 3 2M5 13l3 2 3-2M4 5v6M12 5v6'],
  ['Show motion', 'M1 1h4v3H1zM6 1h4v3H6zM11 1h4v3h-4zM2 6h11v9H2zM6 8l4 2.500L6 13z'],
];

function NavBar() {
  return (
    <div className="absolute right-[2px] top-[156px] flex h-[143px] w-[23px] flex-col items-center justify-between rounded-[3px] border-2 border-[#dadbd8] bg-[#fafafa] px-[2px] py-2">
      {NAV.map(([label, d], i) => (
        <button key={label} type="button" aria-label={label} className={clsx('flex w-full justify-center', i > 0 && i !== 2 && 'border-t border-[#e6e6e6] pt-[3px]')}>
          <svg viewBox="0 0 16 16" className="size-4" fill="none" stroke="#e0e0e0" strokeWidth="1.200"><path d={d} /></svg>
        </button>
      ))}
    </div>
  );
}

function CommandLine() {
  return (
    <div className="absolute bottom-0 left-[221px] right-[220px] flex h-[18px] border border-b-0 border-[#8a8f96] bg-white">
      <div className="flex w-9 items-center gap-[3px] bg-[#6a707b] pl-px text-white">
        <span className="h-[13px] w-1 bg-[#9da2aa]" />
        <button type="button" aria-label="Close command line"><X size={9} strokeWidth={3} /></button>
        <button type="button" aria-label="Customize" className="pl-[3px]"><Wrench size={10} fill="currentColor" /></button>
      </div>
      <label htmlFor="cmd" className="flex items-center gap-px pl-[3px]">
        <svg viewBox="0 0 12 10" className="w-3 h-[10px]" aria-label="Command"><path d="M.5.5h11v8H.5zM2 3l2 1.500L2 6M5 6.500h3" fill="none" stroke="#7a8088" /></svg>
        <svg viewBox="0 0 6 4" className="w-1 h-[3px]" aria-hidden="true"><path d="M0 0h6L3 4z" fill="#666" /></svg>
      </label>
      <input id="cmd" placeholder="Type a command" className="flex-1 px-1 font-['Liberation_Mono',monospace] text-[8px] italic placeholder:text-[#8b8b8b] outline-none" />
      <button type="button" aria-label="History" className="w-2"><svg viewBox="0 0 6 4" className="w-1 h-[3px]"><path d="M0 4h6L3 0z" fill="#555" /></svg></button>
    </div>
  );
}

function StatusBar() {
  const seg = 'flex h-4 items-center justify-center bg-[#353d4d]';
  const item = (name: string, on?: boolean, caret?: boolean) => (
    <button key={name} type="button" aria-label={name} className={clsx('flex h-4 items-center', on && 'bg-[#4f8ac6]')}>
      <span className="flex w-4 justify-center"><Icon name={name} className="size-[11px]" /></span>
      {caret && <span className="flex w-[11px] justify-center"><Caret /></span>}
    </button>
  );
  return (
    <footer className="flex h-5 shrink-0 items-start justify-between text-[#c3c7ce]">
      <nav aria-label="Layouts" className="flex gap-[2px] pl-2">
        <button type="button" className="h-[13px] rounded-b-[4px] bg-[#3b4254] px-[7px] font-bold text-white">Model</button>
        <button type="button" className="h-[13px] rounded-b-[4px] bg-[#2a313e] px-[7px]">Layout1</button>
        <button type="button" className="h-[13px] rounded-b-[4px] bg-[#2a313e] px-[7px]">Layout2</button>
        <button type="button" aria-label="New layout" className="h-[13px] rounded-b-[4px] bg-[#2a313e] px-1"><Plus size={8} /></button>
      </nav>
      <div className="flex gap-[2px] pt-[2px] pr-[2px]">
        <button type="button" className={clsx(seg, 'w-8 text-white')}>MODEL</button>
        <div className={seg}>{item('hash')}{item('dotGrid', false, true)}</div>
        <div className={seg}>{item('ortho')}{item('polar', false, true)}{item('isoDraft', false, true)}</div>
        <div className={seg}>{item('angle', true)}{item('osnap', true)}<span className="flex w-[10px] justify-center"><Caret /></span></div>
        <div className={seg}>
          {item('scaleA', true)}{item('scaleB')}{item('scaleC')}
          <button type="button" className="flex items-center gap-[2px]">1:1<Caret /></button>
        </div>
        <div className={seg}>
          <button type="button" aria-label="Workspace" className="flex items-center gap-[5px] px-[3px]"><Settings size={11} strokeWidth={4} /><Caret /></button>
        </div>
        <button type="button" aria-label="Annotation monitor" className={clsx(seg, 'w-4')}><Plus size={13} /></button>
        <div className={clsx(seg, 'gap-[3px]')}>{item('shapes')}{item('hwAccel', true)}</div>
        <div className={seg}>{item('warn')}</div>
        <div className={clsx(seg, 'pl-[2px]')}>
          {item('clean')}
          <button type="button" aria-label="Customization" className="flex w-4 justify-center"><Menu size={13} /></button>
        </div>
      </div>
    </footer>
  );
}

export default function App() {
  return (
    <div className="flex h-screen flex-col overflow-hidden bg-[#222933] font-['Roboto',sans-serif] text-[8px] leading-[12px] text-[#dfe2e6]">
      <TitleBar />
      <Ribbon />
      <DocTabs />
      <main className="flex min-h-0 flex-1">
        <section aria-label="Sheet view" className="relative flex w-[176px] shrink-0 flex-col border-r-2 border-[#3a4652] bg-[#f3f3f3]">
          <div className="flex h-4 shrink-0 items-center border-b-2 border-[#4a505b] bg-[#2e3543] pl-1">
            <span className="h-[6px] w-[2px] bg-[#7a828f]" />
          </div>
          <div className="min-h-0 flex-1 overflow-hidden"><SheetPreview /></div>
          <div className="h-[3px] shrink-0 bg-[#3a4652]" />
          <svg viewBox="0 0 12 16" className="absolute bottom-0 left-[109px] h-4 w-3" aria-hidden="true">
            <path d="M3 9V2c0-1.500 2-1.500 2 0v4l5 1c1 .2 1.500 1 1.500 2v3l-1.500 3H5L1 10.500c-.8-1 .5-2 1.500-1z" fill="#fff" stroke="#333" strokeWidth=".8" />
            <path d="M6.500 7v3M8.500 7.500v3" stroke="#333" strokeWidth=".6" />
          </svg>
        </section>
        <section aria-label="Model view" className="relative min-w-0 flex-1 border-r-[3px] border-[#2e3a4c] bg-white text-[#222]">
          <p className="pl-[2px] pt-1 whitespace-nowrap">[−][SE Isometric][2D Wireframe]</p>
          <ModelDrawing />
          <div className="absolute right-[6px] top-[5px] flex gap-[3px]">
            <button type="button" aria-label="Minimize view"><svg viewBox="0 0 10 10" className="size-[10px]"><path d="M1 5h8v3H1z" fill="none" stroke="#666" /></svg></button>
            <button type="button" aria-label="Restore view"><svg viewBox="0 0 10 10" className="size-[10px]"><path d="M3 3V1h6v6H7M1 3h6v6H1zM3 5h2v2H3z" fill="none" stroke="#666" /></svg></button>
            <button type="button" aria-label="Close view"><svg viewBox="0 0 10 10" className="size-[10px]"><path d="M1 1h3l1 2 1-2h3v3L7 5l2 1v3H6L5 7 4 9H1V6l2-1-2-1z" fill="none" stroke="#555" /></svg></button>
          </div>
          <ModifyPalette />
          <ViewCube />
          <NavBar />
          <CommandLine />
        </section>
      </main>
      <StatusBar />
    </div>
  );
}
